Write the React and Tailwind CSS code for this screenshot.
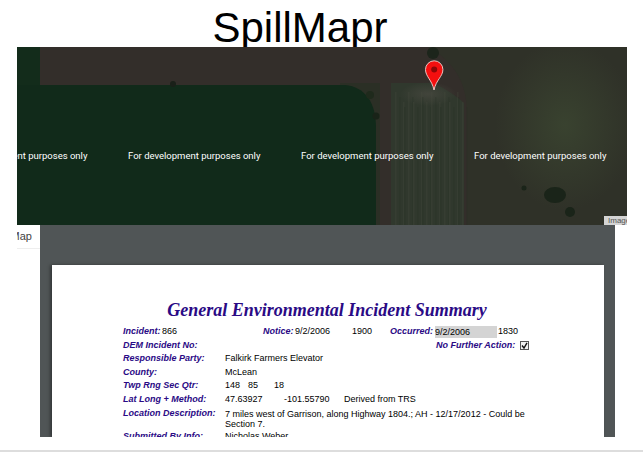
const label = "font-bold italic text-[#2a0a85] whitespace-nowrap";
const ff = { fontFamily: '"Liberation Sans", Arial, sans-serif' };

const stripes = Array.from({ length: 24 }, (_, i) => 395 + i * 3 + (i % 3));

function MapArt() {
  return (
    <svg className="block" width="610" height="178" viewBox="17 47 610 178" preserveAspectRatio="none">
      <defs>
        <radialGradient id="g1">
          <stop offset="0" stopColor="#3a4430" stopOpacity="0.9" />
          <stop offset="1" stopColor="#3a4430" stopOpacity="0" />
        </radialGradient>
        <radialGradient id="g2">
          <stop offset="0" stopColor="#44463d" stopOpacity="0.9" />
          <stop offset="1" stopColor="#44463d" stopOpacity="0" />
        </radialGradient>
      </defs>
      <rect x="17" y="47" width="610" height="178" fill="#2f3128" />
      <ellipse cx="565" cy="125" rx="70" ry="85" fill="url(#g1)" />
      <path d="M40 47H428C448 58 466 76 467 110V225H380V110C380 92 372 85 360 85H40Z" fill="#332e2a" />
      <path d="M391 83H432C445 88 455 95 464 103V225H391Z" fill="#30382d" />
      <ellipse cx="428" cy="94" rx="28" ry="12" fill="url(#g2)" />
      <g opacity=".25">
        {stripes.map((x, i) => (
          <rect key={x} x={x} y={92 + (i % 4) * 5} width="1.5" height="133" fill={i % 2 ? "#263125" : "#4a4e41"} />
        ))}
      </g>
      <path d="M17 47H40V85H17Z" fill="#132c1b" />
      <path d="M340 83H380V225H17V85H340Z" fill="#2b2f25" />
      <path d="M17 85H345C365 87 376 102 376 128V225H17Z" fill="#112a1a" />
      <circle cx="173" cy="84" r="3" fill="#1a2019" />
      <circle cx="433" cy="53" r="6" fill="#1c251b" />
      <circle cx="370" cy="95" r="4" fill="#1f2a1c" />
      <circle cx="376" cy="116" r="3.5" fill="#192318" />
      <ellipse cx="555" cy="195" rx="11" ry="8" fill="#1a2419" />
      <circle cx="570" cy="212" r="5" fill="#1a2419" />
      <circle cx="524" cy="188" r="2.5" fill="#1a2419" />
      <path d="M434 90C432 80 425.5 76.5 425.5 69.5A8.7 8.7 0 0 1 442.9 69.5C442.9 76.5 436 80 434 90Z" fill="#f40f0f" stroke="#f5d5d0" strokeWidth=".9" />
      <circle cx="434.2" cy="69.5" r="3" fill="#8e0707" />
    </svg>
  );
}

function Row({ l, children }) {
  return (
    <div className="flex h-[13.6px]">
      <span className={`${label} w-[102px] shrink-0`}>{l}</span>
      <div className="flex-1 text-black">{children}</div>
    </div>
  );
}

export default function App() {
  return (
    <div className="w-[643px] h-[452px] overflow-hidden bg-white flex flex-col" style={ff}>
      <h1 className="h-[47px] w-[600px] text-center text-[42px] leading-[56px] text-black shrink-0">SpillMapr</h1>

      <div className="relative ml-[17px] w-[610px] h-[178px] shrink-0 overflow-hidden bg-[#2f3128] z-10">
        <MapArt />
        <div className="absolute left-0 top-[102px] w-[610px] h-[14px] overflow-hidden text-white text-[9.5px] leading-[14px] whitespace-nowrap" style={{ fontFamily: 'Roboto, sans-serif' }}>
          <span className="absolute left-[-62px]">For development purposes only</span>
          <span className="absolute left-[111px]">For development purposes only</span>
          <span className="absolute left-[284px]">For development purposes only</span>
          <span className="absolute left-[457px]">For development purposes only</span>
        </div>
        <div className="absolute right-0 bottom-0 w-[23px] h-[9px] bg-[#d4d4d4] text-[#555] text-[8px] leading-[9px] pl-[4px] overflow-hidden whitespace-nowrap">Imagery</div>
      </div>

      <div className="flex ml-[17px] h-[212px] shrink-0">
        <div className="w-[23px] h-[24px] bg-white border-b border-[#eeeeee] overflow-hidden relative">
          <span className="absolute right-[8px] top-[3px] text-[11px] leading-[16px] text-[#444]">Map</span>
        </div>
        <div className="w-[575px] h-[212px] bg-[#505556] pt-[40px] pl-[12px] overflow-hidden">
          <div className="w-[552px] h-[172px] bg-white shadow-[-2px_0_3px_rgba(0,0,0,0.35)] overflow-hidden pt-[33px] text-[9px] leading-[13.6px]">
            <h2 className="text-center font-bold italic text-[#2a0a85] text-[18px] leading-[24px] h-[27px] pr-[2px]" style={{ fontFamily: '"Liberation Serif", "Times New Roman", serif' }}>
              General Environmental Incident Summary
            </h2>
            <div className="pl-[71px]">
              <div className="flex h-[13.6px] items-center">
                <span className={`${label} w-[38px]`}>Incident:</span>
                <span className="w-[102px] pl-[1px]">866</span>
                <span className={`${label} w-[32px]`}>Notice:</span>
                <span className="w-[57px]">9/2/2006</span>
                <span className="w-[38px]">1900</span>
                <span className={`${label} w-[45px]`}>Occurred:</span>
                <span className="w-[62px] h-[12px] bg-[#d4d4d4] leading-[12px]">9/2/2006</span>
                <span className="ml-[1px]">1830</span>
              </div>
              <div className="flex h-[13.6px] items-center">
                <span className={`${label} w-[313px]`}>DEM Incident No:</span>
                <span className={`${label} w-[84px]`}>No Further Action:</span>
                <span className="w-[9px] h-[9px] border border-[#555] bg-[#f2f2f2] flex items-center justify-center">
                  <svg width="7" height="7" viewBox="0 0 7 7"><path d="M1 3.5L3 6L6 .8" fill="none" stroke="#111" strokeWidth="1.4" /></svg>
                </span>
              </div>
              <Row l="Responsible Party:">Falkirk Farmers Elevator</Row>
              <Row l="County:">McLean</Row>
              <Row l="Twp Rng Sec Qtr:">
                <div className="flex"><span className="w-[23px]">148</span><span className="w-[26px]">85</span><span>18</span></div>
              </Row>
              <Row l="Lat Long + Method:">
                <div className="flex"><span className="w-[59px]">47.63927</span><span className="w-[60px]">-101.55790</span><span>Derived from TRS</span></div>
              </Row>
              <div className="flex h-[23.6px]">
                <span className={`${label} w-[102px] shrink-0`}>Location Description:</span>
                <div className="w-[300px] leading-[10px] pt-[2px] text-black">7 miles west of Garrison, along Highway 1804.; AH - 12/17/2012 - Could be Section 7.</div>
              </div>
              <Row l="Submitted By Info:">Nicholas Weber</Row>
            </div>
          </div>
        </div>
      </div>

      <div className="mt-[13px] h-[2px] bg-[#dddddd] shrink-0" />
    </div>
  );
}
